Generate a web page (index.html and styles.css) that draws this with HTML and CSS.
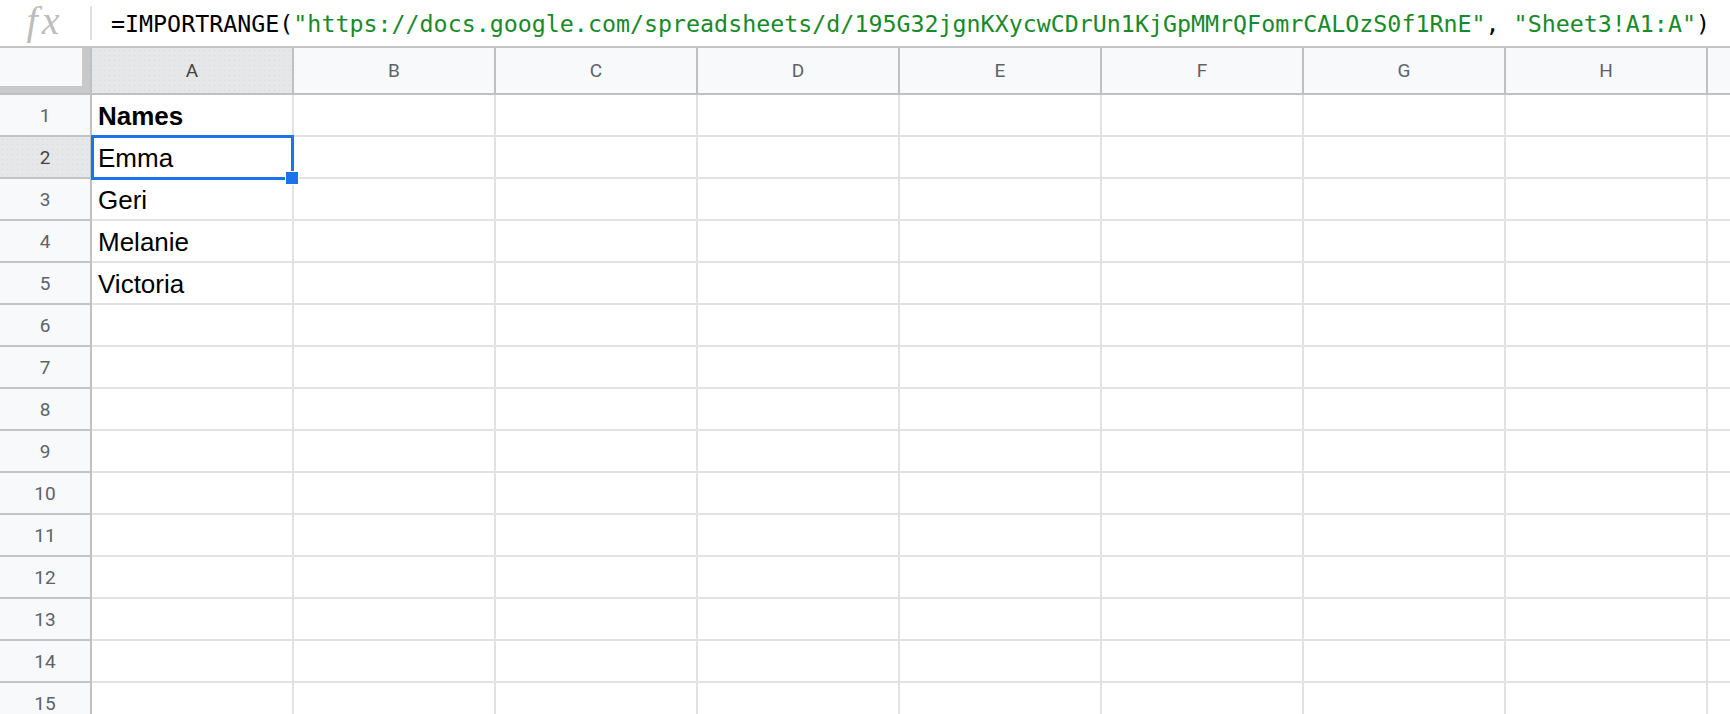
FILE: index.html
```html
<!DOCTYPE html>
<html>
<head>
<meta charset="utf-8">
<link rel="stylesheet" href="styles.css">
</head>
<body>
<div class="formula-bar">
  <div class="fx">fx</div>
  <div class="sep"></div>
  <div class="formula"><span class="fn">=IMPORTRANGE(</span><span class="str">"https://docs.google.com/spreadsheets/d/195G32jgnKXycwCDrUn1KjGpMMrQFomrCALOzS0f1RnE"</span><span class="fn">, </span><span class="str">"Sheet3!A1:A"</span><span class="fn">)</span></div>
</div>
<div class="sheet">
  <div class="grid">
    <div class="corner"></div><div class="ch sel">A</div><div class="ch">B</div><div class="ch">C</div><div class="ch">D</div><div class="ch">E</div><div class="ch">F</div><div class="ch">G</div><div class="ch">H</div><div class="ch last"></div>

    <div class="rh">1</div><div class="c b">Names</div><div class="c"></div><div class="c"></div><div class="c"></div><div class="c"></div><div class="c"></div><div class="c"></div><div class="c"></div><div class="c last"></div>
    <div class="rh sel">2</div><div class="c">Emma</div><div class="c"></div><div class="c"></div><div class="c"></div><div class="c"></div><div class="c"></div><div class="c"></div><div class="c"></div><div class="c last"></div>
    <div class="rh">3</div><div class="c">Geri</div><div class="c"></div><div class="c"></div><div class="c"></div><div class="c"></div><div class="c"></div><div class="c"></div><div class="c"></div><div class="c last"></div>
    <div class="rh">4</div><div class="c">Melanie</div><div class="c"></div><div class="c"></div><div class="c"></div><div class="c"></div><div class="c"></div><div class="c"></div><div class="c"></div><div class="c last"></div>
    <div class="rh">5</div><div class="c">Victoria</div><div class="c"></div><div class="c"></div><div class="c"></div><div class="c"></div><div class="c"></div><div class="c"></div><div class="c"></div><div class="c last"></div>
    <div class="rh">6</div><div class="c"></div><div class="c"></div><div class="c"></div><div class="c"></div><div class="c"></div><div class="c"></div><div class="c"></div><div class="c"></div><div class="c last"></div>
    <div class="rh">7</div><div class="c"></div><div class="c"></div><div class="c"></div><div class="c"></div><div class="c"></div><div class="c"></div><div class="c"></div><div class="c"></div><div class="c last"></div>
    <div class="rh">8</div><div class="c"></div><div class="c"></div><div class="c"></div><div class="c"></div><div class="c"></div><div class="c"></div><div class="c"></div><div class="c"></div><div class="c last"></div>
    <div class="rh">9</div><div class="c"></div><div class="c"></div><div class="c"></div><div class="c"></div><div class="c"></div><div class="c"></div><div class="c"></div><div class="c"></div><div class="c last"></div>
    <div class="rh">10</div><div class="c"></div><div class="c"></div><div class="c"></div><div class="c"></div><div class="c"></div><div class="c"></div><div class="c"></div><div class="c"></div><div class="c last"></div>
    <div class="rh">11</div><div class="c"></div><div class="c"></div><div class="c"></div><div class="c"></div><div class="c"></div><div class="c"></div><div class="c"></div><div class="c"></div><div class="c last"></div>
    <div class="rh">12</div><div class="c"></div><div class="c"></div><div class="c"></div><div class="c"></div><div class="c"></div><div class="c"></div><div class="c"></div><div class="c"></div><div class="c last"></div>
    <div class="rh">13</div><div class="c"></div><div class="c"></div><div class="c"></div><div class="c"></div><div class="c"></div><div class="c"></div><div class="c"></div><div class="c"></div><div class="c last"></div>
    <div class="rh">14</div><div class="c"></div><div class="c"></div><div class="c"></div><div class="c"></div><div class="c"></div><div class="c"></div><div class="c"></div><div class="c"></div><div class="c last"></div>
    <div class="rh">15</div><div class="c"></div><div class="c"></div><div class="c"></div><div class="c"></div><div class="c"></div><div class="c"></div><div class="c"></div><div class="c"></div><div class="c last"></div>
  </div>
  <div class="selection"></div>
  <div class="handle"></div>
</div>
</body>
</html>
```

FILE: styles.css
```css
html, body {
  margin: 0;
  padding: 0;
  background: #fff;
  overflow: hidden;
  width: 1730px;
  height: 714px;
}

.formula-bar {
  height: 46px;
  border-bottom: 2px solid #c4c4c4;
  display: flex;
  align-items: center;
  background: #fff;
}

.fx {
  width: 86px;
  text-align: center;
  font-family: "Liberation Serif", serif;
  font-style: italic;
  font-size: 40px;
  color: #bdbdbd;
  line-height: 46px;
  padding-right: 4px;
  letter-spacing: 4px;
  text-indent: 4px;
  margin-top: -4px;
}

.sep {
  width: 2px;
  height: 34px;
  background: #e0e0e0;
  margin-right: 19px;
}

.formula {
  font-family: "DejaVu Sans Mono", "Liberation Mono", monospace;
  font-size: 23.3px;
  white-space: nowrap;
  color: #000;
}

.formula .str {
  color: #188a2a;
}

.sheet {
  position: relative;
}

.grid {
  display: grid;
  grid-template-columns: 92px repeat(8, 202px) 1fr;
  grid-template-rows: 47px;
  grid-auto-rows: 42px;
}

.corner {
  box-sizing: border-box;
  background: #f8f9fa;
  border-right: 2px solid #c0c0c0;
  border-bottom: 2px solid #c0c0c0;
  box-shadow: inset -8px -7px 0 #c9c9c9;
}

.ch {
  box-sizing: border-box;
  background: #f8f9fa;
  border-right: 2px solid #c0c0c0;
  border-bottom: 2px solid #c0c0c0;
  display: flex;
  align-items: center;
  justify-content: center;
  font-family: Roboto, "Liberation Sans", sans-serif;
  font-size: 19px;
  color: #5f6368;
}

.rh {
  box-sizing: border-box;
  background: #f8f9fa;
  border-right: 2px solid #c0c0c0;
  border-bottom: 2px solid #c4c4c4;
  display: flex;
  align-items: center;
  justify-content: center;
  font-family: Roboto, "Liberation Sans", sans-serif;
  font-size: 19px;
  color: #5f6368;
  padding-top: 1px;
}

.sel {
  background-color: #e6e7e9;
  background-image: radial-gradient(circle, #d6d7d9 0.7px, transparent 1px);
  background-size: 5px 5px;
  color: #444;
}

.c {
  box-sizing: border-box;
  border-right: 2px solid #e2e2e2;
  border-bottom: 2px solid #e2e2e2;
  font-family: "Liberation Sans", Arial, sans-serif;
  font-size: 26px;
  line-height: 30px;
  color: #000;
  padding: 0 5px 4px 6px;
  display: flex;
  align-items: flex-end;
  white-space: nowrap;
  overflow: hidden;
}

.c.b {
  font-weight: bold;
}

.last {
  border-right: none;
}

.selection {
  position: absolute;
  left: 91px;
  top: 87px;
  width: 203px;
  height: 45px;
  box-sizing: border-box;
  border: 3px solid #1a73e8;
  pointer-events: none;
}

.handle {
  position: absolute;
  left: 285px;
  top: 123px;
  width: 12px;
  height: 12px;
  background: #1a73e8;
  border: 1px solid #fff;
}
```
